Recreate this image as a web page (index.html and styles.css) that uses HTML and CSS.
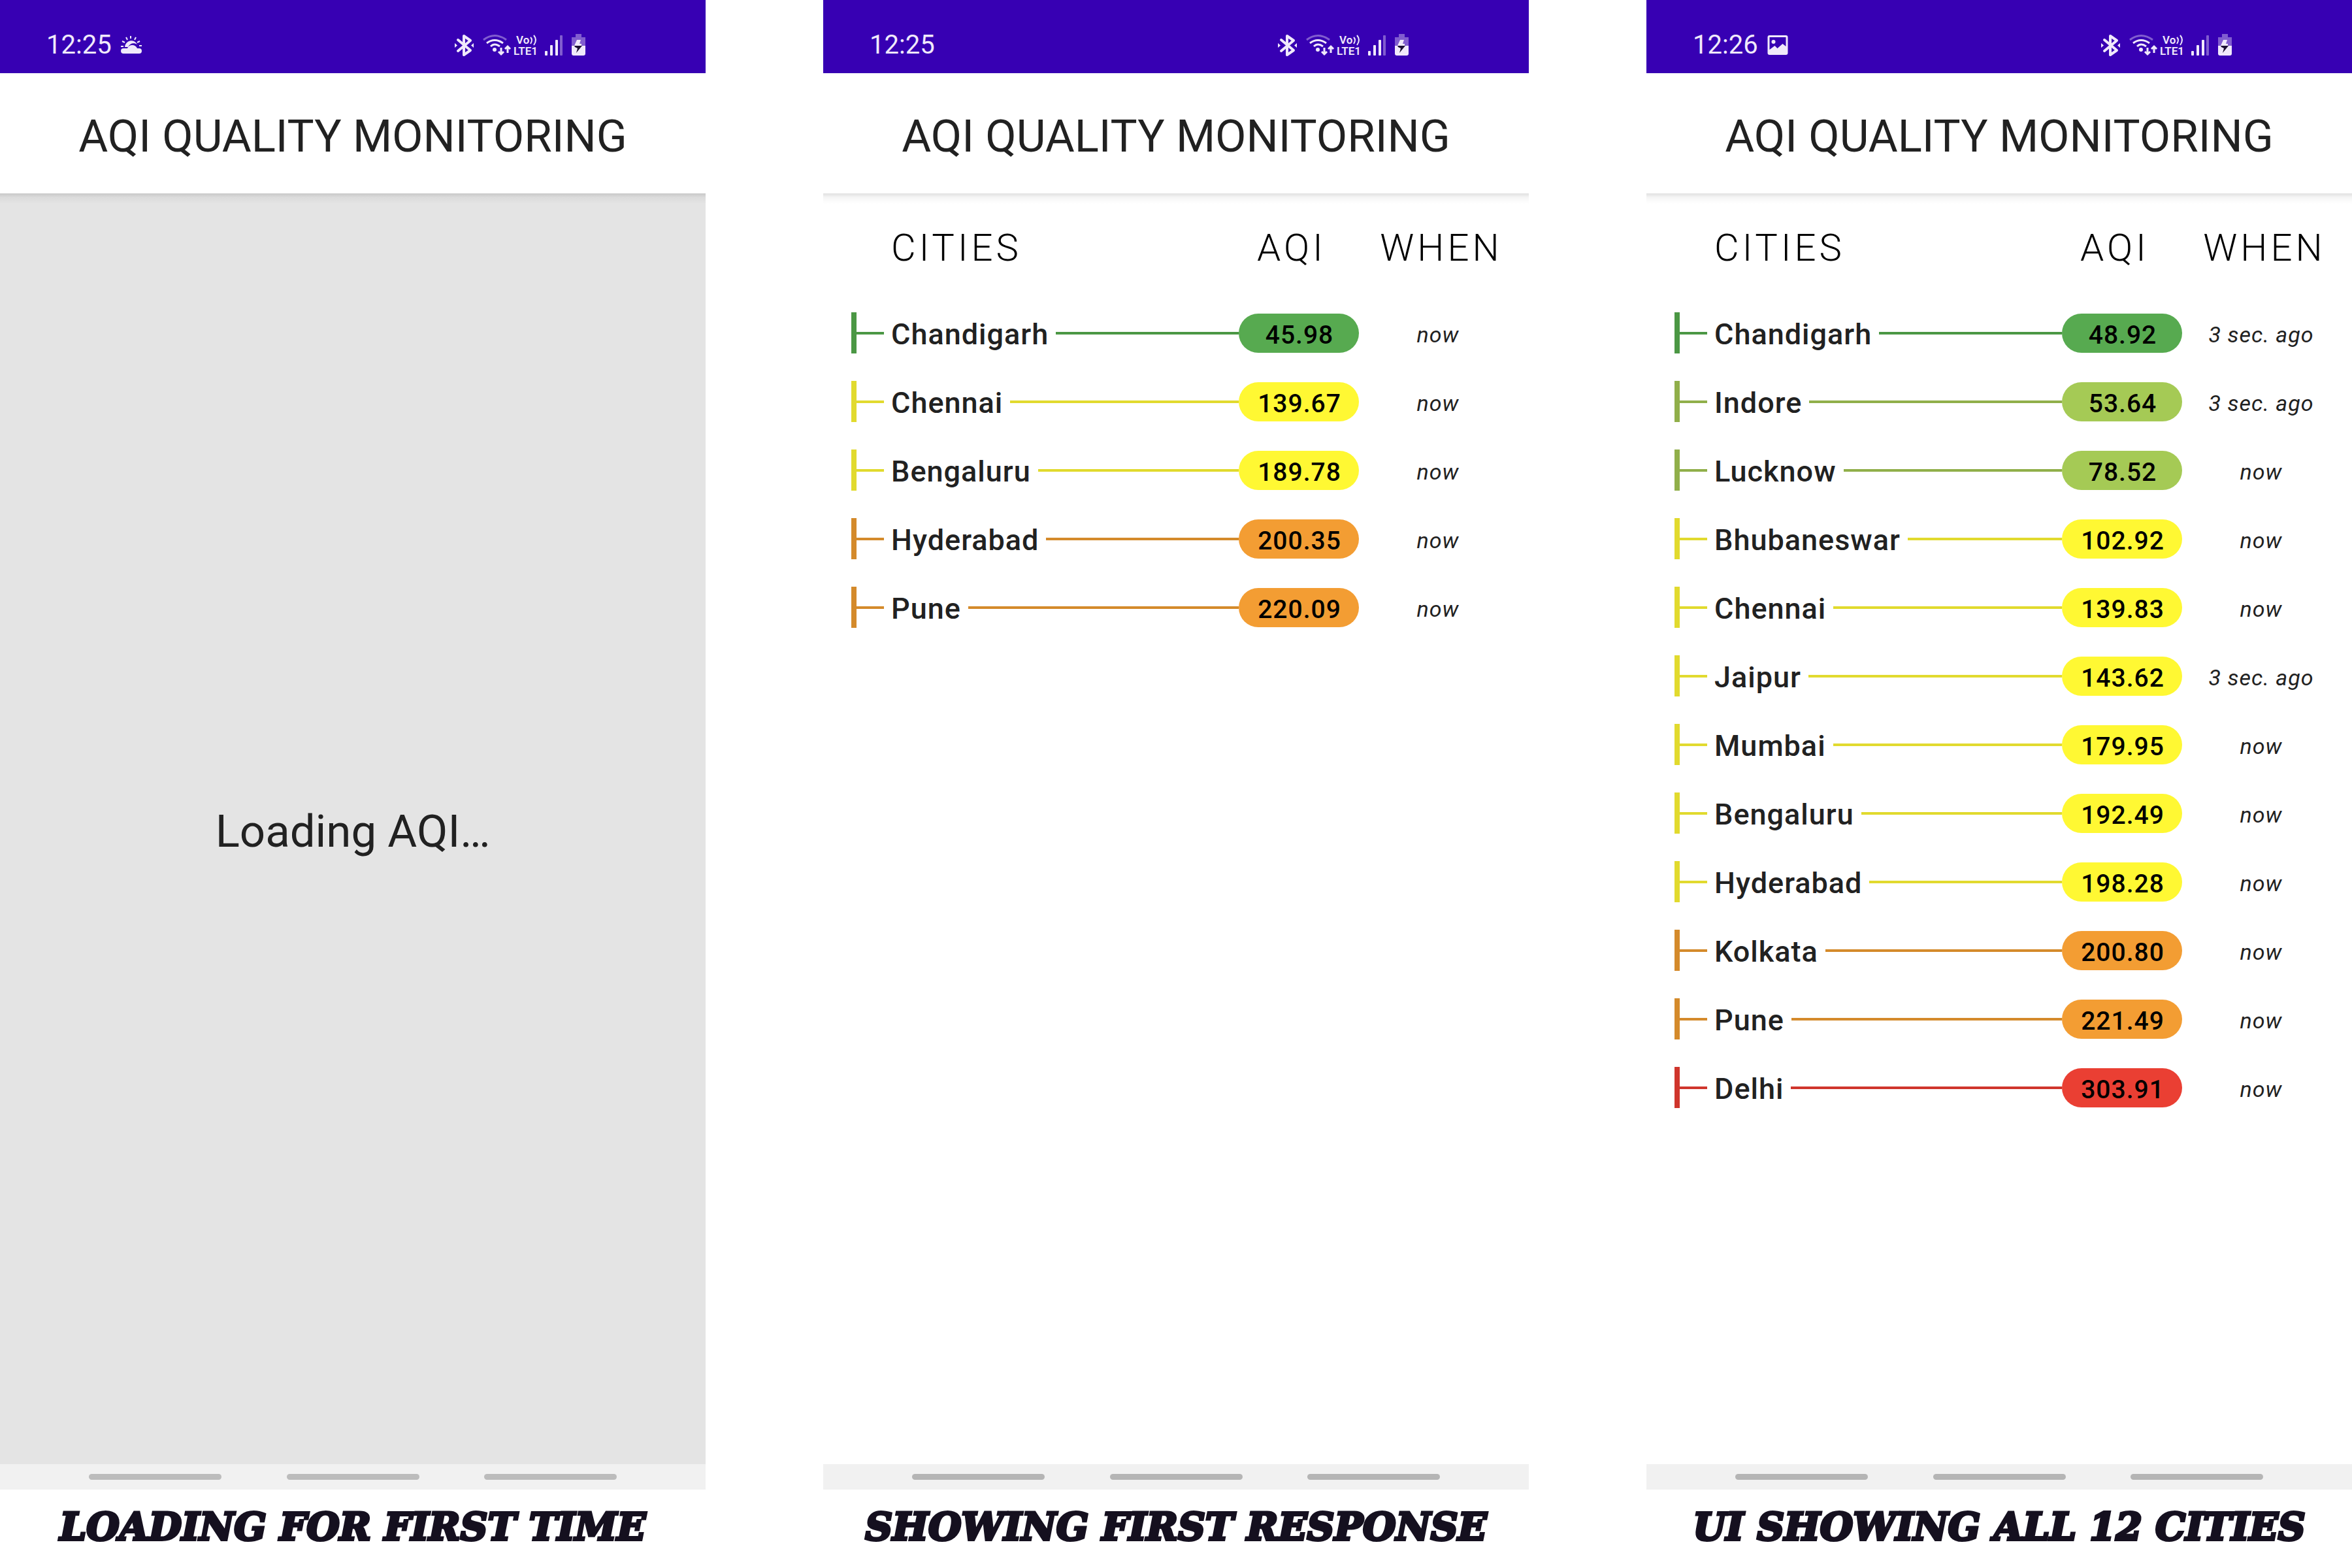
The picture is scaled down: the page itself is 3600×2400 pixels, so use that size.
FILE: index.html
```html
<!DOCTYPE html>
<html lang="en">
<head>
<meta charset="utf-8">
<title>AQI Quality Monitoring</title>
<link rel="stylesheet" href="styles.css">
</head>
<body>
<svg class="sprite" aria-hidden="true">
  <symbol id="status" viewBox="0 0 204 36">
    <path fill="none" stroke="currentColor" stroke-width="4" stroke-linejoin="round" stroke-linecap="round" d="M7 10l19 16-10 7V4l10 7L7 27"/>
    <path fill="currentColor" d="M2 15l4 3.500-4 3.500zM31 15l-4 3.500 4 3.500z"/>
    <g fill="none" stroke="currentColor" stroke-width="3">
      <path opacity=".4" d="M46 10Q63-3 81 10"/>
      <path d="M51 15Q63 6 76 15"/>
      <path d="M57 20Q63 14 71 20"/>
      <path d="M73 22v10M69 28l4 4 4-4M83 30V20M79 24l4-4 4 4"/>
    </g>
    <circle cx="63" cy="25" r="3" fill="currentColor"/>
    <g fill="currentColor" font-family="Roboto, sans-serif" font-weight="600">
      <text x="96" y="16" font-size="17">Vo</text>
      <text x="92" y="33" font-size="17">LTE1</text>
    </g>
    <path fill="none" stroke="currentColor" stroke-width="2" d="M118 6q4 4 0 10M123 3q6 7 0 15"/>
    <g fill="currentColor">
      <rect x="140" y="27" width="4" height="7" rx="1"/>
      <rect x="148" y="18" width="4" height="16" rx="1"/>
      <rect x="156" y="10" width="4" height="24" rx="1"/>
      <rect x="163" y="3" width="4" height="31" rx="1" opacity=".4"/>
      <path opacity=".4" d="M187 1h9v5h6v13h-21V6h6z"/>
      <path d="M181 19h21v12q0 3-3 3h-15q-3 0-3-3z"/>
      <path d="M189 10h6l-2 6h3v3h-11z"/>
    </g>
    <path fill="#1c1033" d="M185 19h12l-9 11 2-7-4-2z"/>
  </symbol>
  <symbol id="weather" viewBox="0 0 32 28">
    <path fill="none" stroke="currentColor" stroke-width="2" d="M15 0v4M8 2l2 4M23 2l-2 4M2 8l4 2M29 8l-4 2M0 16h4M28 15h4"/>
    <path fill="currentColor" d="M6 17a10 10 0 0 1 19-4c-5-3-11-2-14 4z"/>
    <path fill="currentColor" d="M4 27a3.500 3.500 0 0 1 0-8h6c2-6 12-7 15 0h3a3.500 3.500 0 0 1 0 8z"/>
  </symbol>
  <symbol id="picture" viewBox="0 0 31 30">
    <path fill="currentColor" fill-rule="evenodd" d="M3 0h25q3 0 3 3v24q0 3-3 3H3q-3 0-3-3V3q0-3 3-3zM3 3v19l8-6 4 4 8-7 5 4V3z"/>
    <circle cx="9" cy="10" r="3" fill="currentColor"/>
  </symbol>
</svg>
<main class="screens">
  <figure class="screen">
    <div class="phone">
      <div class="status-bar"><span class="clock">12:25</span><svg class="notice"><use href="#weather"/></svg><svg class="indicators"><use href="#status"/></svg></div>
      <h1 class="app-bar">AQI QUALITY MONITORING</h1>
      <div class="content loading">Loading AQI…</div>
      <div class="nav-bar dim"><i></i><i></i><i></i></div>
    </div>
    <figcaption>LOADING FOR FIRST TIME</figcaption>
  </figure>

  <figure class="screen">
    <div class="phone">
      <div class="status-bar"><span class="clock">12:25</span><svg class="indicators"><use href="#status"/></svg></div>
      <h1 class="app-bar">AQI QUALITY MONITORING</h1>
      <div class="content">
        <table class="readings">
          <thead><tr><th class="cities">CITIES</th><th class="aqi">AQI</th><th class="when">WHEN</th></tr></thead>
          <tbody>
            <tr class="good"><td><div class="city"><span>Chandigarh</span></div></td><td><span class="pill">45.98</span></td><td class="time">now</td></tr>
            <tr class="moderate"><td><div class="city"><span>Chennai</span></div></td><td><span class="pill">139.67</span></td><td class="time">now</td></tr>
            <tr class="moderate"><td><div class="city"><span>Bengaluru</span></div></td><td><span class="pill">189.78</span></td><td class="time">now</td></tr>
            <tr class="poor"><td><div class="city"><span>Hyderabad</span></div></td><td><span class="pill">200.35</span></td><td class="time">now</td></tr>
            <tr class="poor"><td><div class="city"><span>Pune</span></div></td><td><span class="pill">220.09</span></td><td class="time">now</td></tr>
          </tbody>
        </table>
      </div>
      <div class="nav-bar"><i></i><i></i><i></i></div>
    </div>
    <figcaption>SHOWING FIRST RESPONSE</figcaption>
  </figure>

  <figure class="screen">
    <div class="phone">
      <div class="status-bar"><span class="clock">12:26</span><svg class="notice"><use href="#picture"/></svg><svg class="indicators"><use href="#status"/></svg></div>
      <h1 class="app-bar">AQI QUALITY MONITORING</h1>
      <div class="content">
        <table class="readings">
          <thead><tr><th class="cities">CITIES</th><th class="aqi">AQI</th><th class="when">WHEN</th></tr></thead>
          <tbody>
            <tr class="good"><td><div class="city"><span>Chandigarh</span></div></td><td><span class="pill">48.92</span></td><td class="time">3 sec. ago</td></tr>
            <tr class="fair"><td><div class="city"><span>Indore</span></div></td><td><span class="pill">53.64</span></td><td class="time">3 sec. ago</td></tr>
            <tr class="fair"><td><div class="city"><span>Lucknow</span></div></td><td><span class="pill">78.52</span></td><td class="time">now</td></tr>
            <tr class="moderate"><td><div class="city"><span>Bhubaneswar</span></div></td><td><span class="pill">102.92</span></td><td class="time">now</td></tr>
            <tr class="moderate"><td><div class="city"><span>Chennai</span></div></td><td><span class="pill">139.83</span></td><td class="time">now</td></tr>
            <tr class="moderate"><td><div class="city"><span>Jaipur</span></div></td><td><span class="pill">143.62</span></td><td class="time">3 sec. ago</td></tr>
            <tr class="moderate"><td><div class="city"><span>Mumbai</span></div></td><td><span class="pill">179.95</span></td><td class="time">now</td></tr>
            <tr class="moderate"><td><div class="city"><span>Bengaluru</span></div></td><td><span class="pill">192.49</span></td><td class="time">now</td></tr>
            <tr class="moderate"><td><div class="city"><span>Hyderabad</span></div></td><td><span class="pill">198.28</span></td><td class="time">now</td></tr>
            <tr class="poor"><td><div class="city"><span>Kolkata</span></div></td><td><span class="pill">200.80</span></td><td class="time">now</td></tr>
            <tr class="poor"><td><div class="city"><span>Pune</span></div></td><td><span class="pill">221.49</span></td><td class="time">now</td></tr>
            <tr class="severe"><td><div class="city"><span>Delhi</span></div></td><td><span class="pill">303.91</span></td><td class="time">now</td></tr>
          </tbody>
        </table>
      </div>
      <div class="nav-bar"><i></i><i></i><i></i></div>
    </div>
    <figcaption>UI SHOWING ALL 12 CITIES</figcaption>
  </figure>
</main>
</body>
</html>
```
FILE: styles.css
```css
* { box-sizing: border-box; }
body { margin: 0; background: #fff; color: #212121; font-family: Roboto, sans-serif; }
.sprite { display: none; }

.screens { display: grid; grid-template-columns: repeat(3, 1fr); gap: 5%; min-height: 100vh; }
.screen { margin: 0; display: flex; flex-direction: column; }
.phone { flex: 1; display: flex; flex-direction: column; background: #fff; }

.status-bar { height: 112px; padding: 26px 182px 0 71px; display: flex; align-items: center; gap: 14px; background: #3700b3; color: #f0e9fb; }
.clock { font-size: 40px; line-height: 48px; }
.notice { width: 32px; height: 30px; }
.indicators { width: 204px; height: 36px; margin-left: auto; }

.app-bar { margin: 0; height: 184px; padding-top: 9px; display: flex; align-items: center; justify-content: center; font-size: 69px; font-weight: 400; line-height: 80px; white-space: nowrap; background: #fff; }

.content { flex: 1; padding: 38px 18px 0 43px; background: linear-gradient(rgba(0, 0, 0, .12), rgba(0, 0, 0, .04) 6px, transparent 16px); }
.loading { display: flex; align-items: center; justify-content: center; padding: 8px 0 0; font-size: 69px; background-color: #e4e4e4; }

.readings { width: 100%; border-collapse: collapse; table-layout: fixed; }
.readings th { height: 123px; padding: 11px 0 0; font-size: 58px; font-weight: 300; line-height: 68px; letter-spacing: 5px; text-align: center; vertical-align: top; color: #000; }
.readings td { height: 105px; padding: 0; }
.readings .cities { width: auto; padding-left: 61px; text-align: left; }
.readings .aqi { width: 184px; padding-left: 28px; text-align: left; }
.readings .when { width: 242px; padding-left: 10px; }

.city { display: flex; align-items: center; gap: 11px; height: 63px; border-left: 8px solid var(--line); font-size: 45px; font-weight: 500; letter-spacing: 1px; }
.city::before, .city::after { content: ""; height: 4px; background: var(--line); }
.city::before { width: 42px; }
.city::after { flex: 1; }
.city span { padding-top: 4px; }
.pill { display: block; height: 60px; padding-left: 2px; border-radius: 30px; background: var(--fill); color: #000; font-size: 39px; font-weight: 500; line-height: 66px; letter-spacing: 1px; text-align: center; }
.time { font-size: 34px; font-style: italic; letter-spacing: 1px; text-align: center; }
.readings .time { padding-top: 4px; }

.good { --line: #4b9744; --fill: #57aa50; }
.fair { --line: #90af4a; --fill: #a5ca55; }
.moderate { --line: #e1da2e; --fill: #fff833; }
.poor { --line: #d48a2b; --fill: #f39d33; }
.severe { --line: #cf352c; --fill: #ea3f33; }

.nav-bar { height: 39px; padding: 0 136px; display: flex; align-items: center; justify-content: space-between; background: #f1f1f1; }
.nav-bar i { width: 203px; height: 9px; border-radius: 5px; background: #b5b5b5; }
.nav-bar.dim i { background: #bcbcbc; }

figcaption { height: 120px; padding-top: 22px; color: #15101f; font-family: "DejaVu Serif", serif; font-size: 58px; font-weight: 700; font-style: italic; line-height: 70px; text-align: center; white-space: nowrap; -webkit-text-stroke: 4px #15101f; }
```
